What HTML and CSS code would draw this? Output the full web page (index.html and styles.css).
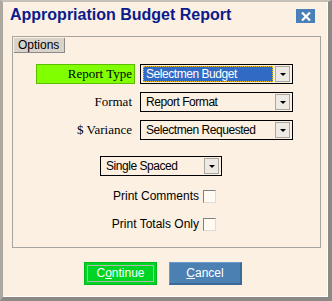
FILE: index.html
```html
<!DOCTYPE html>
<html lang="en">
  <head>
    <meta charset="UTF-8" />
    <meta name="viewport" content="width=device-width, initial-scale=1.0" />
    <title>Appropriation Budget Report</title>
    <link rel="stylesheet" href="styles.css">
  </head>
  <body>
    <div class="window">
      <div class="titlebar">
        <h1 class="title">Appropriation Budget Report</h1>
        <button class="close-button" title="Close">
          <svg width="10" height="9" viewBox="0 0 10 9">
            <path d="M1 0.5 L9 8.5 M9 0.5 L1 8.5" stroke="#fff" stroke-width="2.2" />
          </svg>
        </button>
      </div>

      <!-- options group -->
      <div class="group">
        <div class="tab">Options</div>

        <div class="fields">
          <div class="field-row">
            <label class="field-label highlight">Report Type</label>
            <div class="select">
              <span class="select-value focused">Selectmen Budget</span>
              <span class="arrow"></span>
            </div>
          </div>
          <div class="field-row">
            <label class="field-label">Format</label>
            <div class="select">
              <span class="select-value">Report Format</span>
              <span class="arrow"></span>
            </div>
          </div>
          <div class="field-row">
            <label class="field-label">$ Variance</label>
            <div class="select">
              <span class="select-value">Selectmen Requested</span>
              <span class="arrow"></span>
            </div>
          </div>
        </div>

        <div class="spacing-row">
          <div class="select narrow">
            <span class="select-value">Single Spaced</span>
            <span class="arrow"></span>
          </div>
        </div>

        <div class="checks">
          <label class="check-row">Print Comments <span class="checkbox"></span></label>
          <label class="check-row">Print Totals Only <span class="checkbox"></span></label>
        </div>
      </div>

      <div class="buttons">
        <button class="btn btn-continue"><span class="btn-focus">C<u>o</u>ntinue</span></button>
        <button class="btn btn-cancel"><u>C</u>ancel</button>
      </div>
    </div>
  </body>
</html>
```

FILE: styles.css
```css
html,
body {
  margin: 0;
  width: 332px;
  height: 301px;
  overflow: hidden;
}
body {
  font-family: "Liberation Sans", Arial, sans-serif;
  font-size: 12px;
  color: #000;
}
.window {
  box-sizing: border-box;
  width: 332px;
  height: 301px;
  background-color: #fbf0e2;
  border-style: solid;
  border-width: 2px 4px 4px 3px;
  border-color: #c4c0b8 #8c8a86 #8c8a86 #aca8a0;
  box-shadow: inset -1px -1px 0 #ffffff;
  display: flex;
  flex-direction: column;
}
.titlebar {
  display: flex;
  align-items: flex-start;
  justify-content: space-between;
  height: 34px;
  padding: 3px 13px 0 7px;
  box-sizing: border-box;
}
.title {
  margin: 0;
  font-size: 16px;
  line-height: 20px;
  font-weight: bold;
  color: #0c1a8c;
}
.close-button {
  width: 19px;
  height: 14px;
  margin-top: 4px;
  padding: 0;
  border: none;
  background-color: #4a80b8;
  display: flex;
  align-items: center;
  justify-content: center;
}
.group {
  box-sizing: border-box;
  height: 212px;
  margin: 0 7px 0 9px;
  border: 1px solid #a8a49e;
  display: flex;
  flex-direction: column;
}
.tab {
  align-self: flex-start;
  box-sizing: border-box;
  height: 15px;
  margin: 1px 0 0 1px;
  padding: 0 5px 0 4px;
  line-height: 14px;
  background-color: #d8d4cc;
  border-right: 1px solid #8c8a86;
  border-bottom: 1px solid #8c8a86;
}
.fields {
  display: flex;
  flex-direction: column;
  gap: 8px;
  margin-top: 11px;
  padding-left: 23px;
}
.field-row {
  display: flex;
  align-items: center;
  gap: 5px;
}
.field-label {
  box-sizing: border-box;
  width: 99px;
  height: 20px;
  padding-right: 2px;
  font-family: "Liberation Serif", "Times New Roman", serif;
  font-size: 13px;
  line-height: 18px;
  text-align: right;
  border: 1px solid transparent;
}
.highlight {
  background-color: #80ff00;
  border-color: #5cbc00;
}
.select {
  box-sizing: border-box;
  width: 153px;
  height: 20px;
  padding: 1px 2px 1px 2px;
  border: 1px solid #000;
  display: flex;
  gap: 2px;
  font-size: 12px;
  letter-spacing: -0.45px;
}
.select-value {
  flex: 1;
  box-sizing: border-box;
  padding-left: 2px;
  line-height: 14px;
  border: 1px solid transparent;
}
.focused {
  background-color: #316ac5;
  color: #fff;
  border: 1px dotted #f0c000;
}
.arrow {
  box-sizing: border-box;
  width: 15px;
  background-color: #eceae2;
  border: 1px solid #a8a8a0;
  display: flex;
  align-items: center;
  justify-content: center;
}
.arrow::after {
  content: "";
  border-left: 3px solid transparent;
  border-right: 3px solid transparent;
  border-top: 3px solid #000;
}
.spacing-row {
  margin-top: 16px;
  padding-left: 87px;
}
.narrow {
  width: 122px;
}
.checks {
  width: 203px;
  margin-top: 13px;
  display: flex;
  flex-direction: column;
  gap: 14px;
}
.check-row {
  display: flex;
  justify-content: flex-end;
  align-items: center;
  gap: 4px;
  height: 14px;
  font-size: 12px;
}
.checkbox {
  box-sizing: border-box;
  width: 13px;
  height: 13px;
  background-color: #fffaf2;
  border-style: solid;
  border-width: 1px;
  border-color: #808080 #e0dcd4 #e0dcd4 #808080;
}
.buttons {
  display: flex;
  gap: 12px;
  margin-top: 14px;
  padding-left: 81px;
}
.btn {
  box-sizing: border-box;
  width: 73px;
  height: 23px;
  padding: 0;
  font-family: "Liberation Sans", Arial, sans-serif;
  font-size: 12px;
  color: #fff;
  cursor: pointer;
}
.btn-continue {
  background-color: #00d424;
  border: 1px solid #00b81c;
  padding: 2px;
}
.btn-focus {
  box-sizing: border-box;
  display: block;
  height: 100%;
  line-height: 15px;
  border: 1px solid #b0b8b0;
}
.btn-cancel {
  background-color: #4a80b2;
  border-style: solid;
  border-width: 1px 2px 2px 1px;
  border-color: #6a9ad0 #3a6a98 #3a6a98 #6a9ad0;
}
```
